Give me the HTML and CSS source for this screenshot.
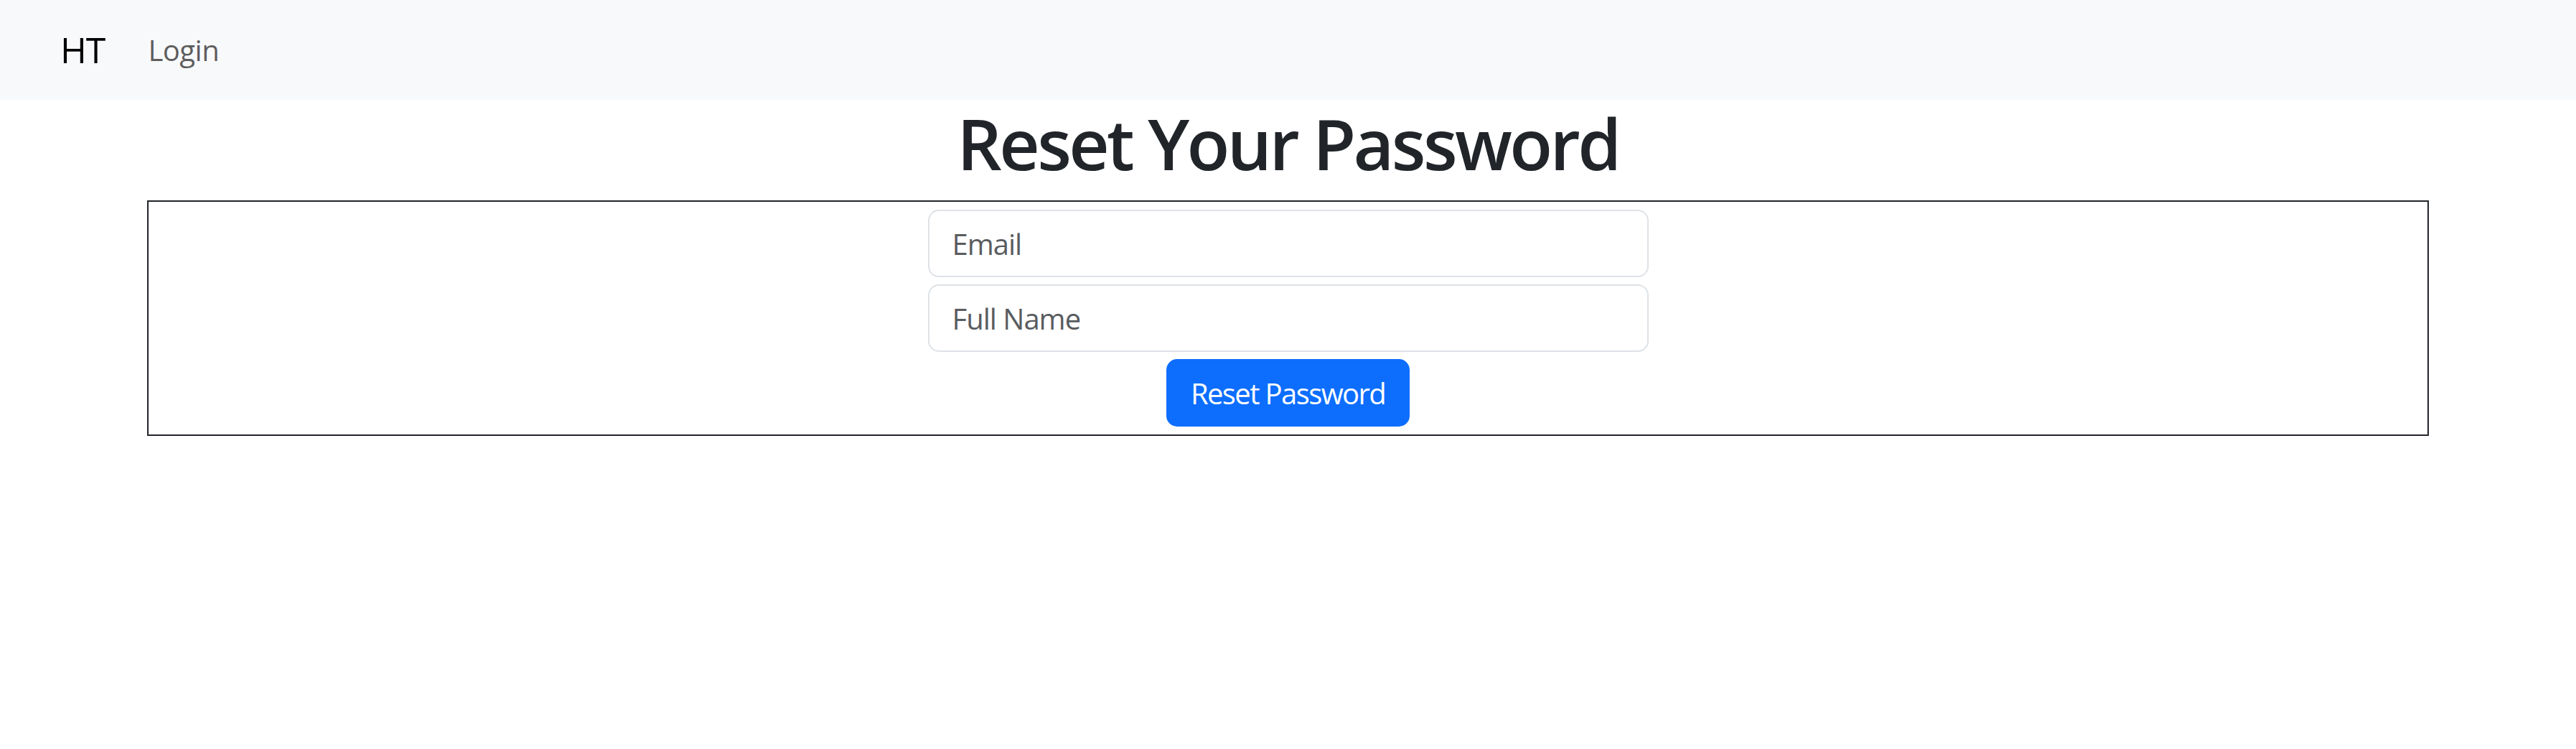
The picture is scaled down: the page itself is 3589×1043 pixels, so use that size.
FILE: index.html
```html
<!DOCTYPE html>
<html lang="en">
<head>
<meta charset="utf-8">
<title>Reset Your Password</title>
<link rel="stylesheet" href="styles.css">
</head>
<body>
<nav class="navbar">
  <a class="brand" href="#">HT</a>
  <a class="nav-link" href="#">Login</a>
</nav>
<main>
  <h1 class="title">Reset Your Password</h1>
  <form class="reset-box">
    <input class="field" type="email" placeholder="Email">
    <input class="field" type="text" placeholder="Full Name">
    <button class="btn-primary" type="button">Reset Password</button>
  </form>
</main>
</body>
</html>
```
FILE: styles.css
```css
html, body {
  margin: 0;
  padding: 0;
  background: #fff;
}
body {
  font-family: "Open Sans", "Noto Sans", "Liberation Sans", sans-serif;
  color: #212529;
}
.navbar {
  height: 139px;
  background: #f8f9fa;
  display: flex;
  align-items: center;
  padding-left: 84px;
  box-sizing: border-box;
}
.brand {
  font-size: 50px;
  line-height: 75px;
  color: #000;
  text-decoration: none;
  margin-right: 40px;
  letter-spacing: -1px;
}
.nav-link {
  font-size: 40px;
  line-height: 60px;
  padding: 0 20px;
  color: rgba(0, 0, 0, 0.65);
  text-decoration: none;
  letter-spacing: -0.5px;
}
.title {
  margin: 0 0 20px;
  text-align: center;
  font-size: 98px;
  line-height: 120px;
  font-weight: 600;
  letter-spacing: -3.6px;
  color: #212529;
}
.reset-box {
  margin: 0 205px;
  border: 2px solid #212529;
  padding: 11px 0;
  display: flex;
  flex-direction: column;
  align-items: center;
  gap: 10px;
}
.field {
  width: 1004px;
  height: 94px;
  box-sizing: border-box;
  border: 2px solid #dee2e6;
  border-radius: 15px;
  padding: 0 32px;
  font-family: inherit;
  font-size: 40px;
  letter-spacing: -1px;
  color: #212529;
  background: #fff;
  outline: none;
}
.field::placeholder {
  color: #595c5f;
  opacity: 1;
}
.btn-primary {
  height: 94px;
  padding: 0 34px;
  border: none;
  border-radius: 15px;
  background: #0d6efd;
  color: #fff;
  font-family: inherit;
  font-size: 40px;
  letter-spacing: -1.6px;
  cursor: pointer;
}
```
